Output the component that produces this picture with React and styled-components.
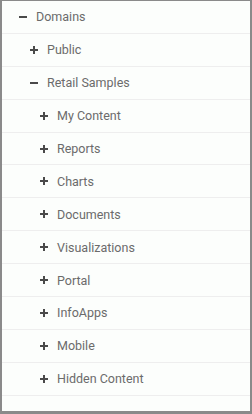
import React from "react";
import styled, { createGlobalStyle } from "styled-components";

const GlobalStyle = createGlobalStyle`
  html, body {
    margin: 0;
    padding: 0;
    background: #ffffff;
  }
  body {
    font-family: Roboto, "Liberation Sans", Arial, sans-serif;
  }
`;

const tree = [
  { label: "Domains", level: 0, open: true },
  { label: "Public", level: 1 },
  { label: "Retail Samples", level: 1, open: true },
  { label: "My Content", level: 2 },
  { label: "Reports", level: 2 },
  { label: "Charts", level: 2 },
  { label: "Documents", level: 2 },
  { label: "Visualizations", level: 2 },
  { label: "Portal", level: 2 },
  { label: "InfoApps", level: 2 },
  { label: "Mobile", level: 2 },
  { label: "Hidden Content", level: 2 },
];

const Toggle = ({ open }) => (
  <Icon viewBox="0 0 8 8" aria-hidden="true">
    <rect x="0" y="3" width="8" height="2" fill="currentColor" />
    {!open && <rect x="3" y="0" width="2" height="8" fill="currentColor" />}
  </Icon>
);

const App = () => (
  <>
    <GlobalStyle />
    <Panel>
      {tree.map((node) => (
        <Row key={node.label} $level={node.level}>
          <Toggle open={node.open} />
          <Label>{node.label}</Label>
        </Row>
      ))}
    </Panel>
  </>
);

// Styled Components

const Panel = styled.div`
  box-sizing: border-box;
  width: 252px;
  height: 414px;
  background: #fcfefc;
  border: 2px solid #8a8a8a;
  border-top-width: 1px;
  border-bottom-width: 3px;
  overflow: hidden;
`;

const Row = styled.div`
  display: flex;
  align-items: center;
  gap: 9px;
  height: 31.9px;
  padding-left: ${(p) => 17 + Math.round(p.$level * 10.5)}px;
  border-bottom: 1px solid #eeeeee;
`;

const Icon = styled.svg`
  width: 8px;
  height: 8px;
  flex: none;
  color: #4a4a4a;
`;

const Label = styled.span`
  font-size: 12.5px;
  color: #6b6b6b;
  white-space: nowrap;
`;

export default App;
